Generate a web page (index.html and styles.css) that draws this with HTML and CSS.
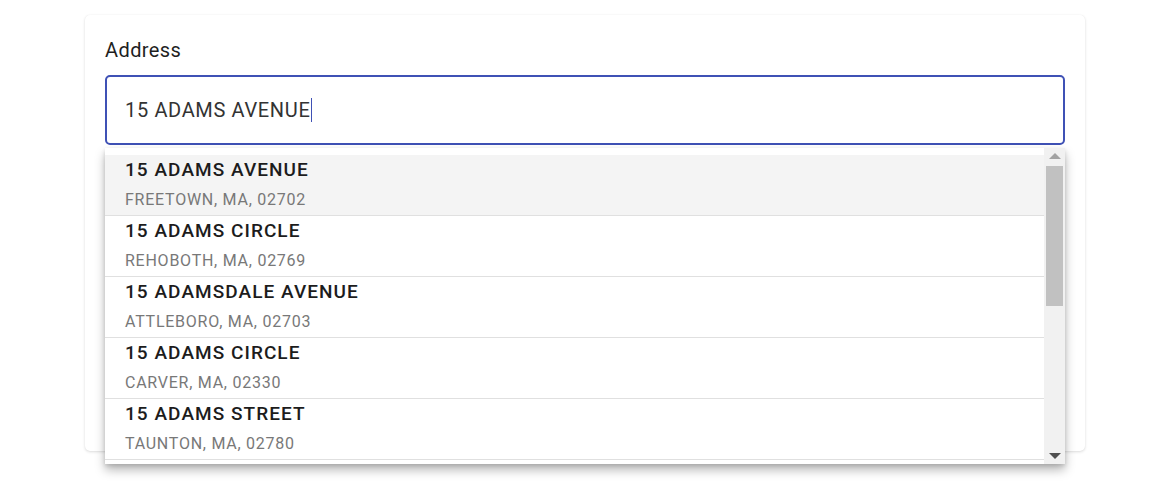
FILE: index.html
```html
<!DOCTYPE html>
<html lang="en">
<head>
<meta charset="utf-8">
<title>Address</title>
<link rel="stylesheet" href="styles.css">
</head>
<body>
<div class="page">
  <div class="card">
    <label class="label">Address</label>
    <div class="field">
      <div class="input"><span class="value">15 ADAMS AVENUE</span><span class="caret"></span></div>
      <div class="dropdown">
        <ul class="list">
          <li class="item active"><div class="title">15 ADAMS AVENUE</div><div class="sub">FREETOWN, MA, 02702</div></li>
          <li class="item"><div class="title">15 ADAMS CIRCLE</div><div class="sub">REHOBOTH, MA, 02769</div></li>
          <li class="item"><div class="title">15 ADAMSDALE AVENUE</div><div class="sub">ATTLEBORO, MA, 02703</div></li>
          <li class="item"><div class="title">15 ADAMS CIRCLE</div><div class="sub">CARVER, MA, 02330</div></li>
          <li class="item"><div class="title">15 ADAMS STREET</div><div class="sub">TAUNTON, MA, 02780</div></li>
        </ul>
        <div class="scrollbar">
          <div class="arrow up"></div>
          <div class="track"><div class="thumb"></div></div>
          <div class="arrow down"></div>
        </div>
      </div>
    </div>
  </div>
</div>
</body>
</html>
```
FILE: styles.css
```css
* { box-sizing: border-box; }
html, body { margin: 0; padding: 0; background: #fff; }
body { font-family: Roboto, "Liberation Sans", Arial, sans-serif; }
.page { padding: 15px 0 0 85px; height: 498px; overflow: hidden; }
.card {
  width: 1000px;
  height: 436px;
  background: #fff;
  border-radius: 5px;
  box-shadow: 0 1px 3px rgba(0,0,0,0.14), 0 0 1px rgba(0,0,0,0.06);
  padding: 22px 20px 0 20px;
}
.label {
  display: block;
  font-size: 20px;
  line-height: 26px;
  letter-spacing: 0.4px;
  color: #1f1f1f;
}
.field { position: relative; margin-top: 12px; }
.input {
  height: 70px;
  border: 2px solid #3f51b5;
  border-radius: 5px;
  display: flex;
  align-items: center;
  padding-left: 18px;
}
.value {
  font-size: 20px;
  letter-spacing: 0.65px;
  color: #333;
}
.caret {
  display: inline-block;
  width: 1px;
  height: 24px;
  background: #3f51b5;
  margin-left: 1px;
}
.dropdown {
  position: absolute;
  left: 0;
  top: 73px;
  width: 960px;
  height: 316px;
  background: #fff;
  box-shadow: 0 6px 10px rgba(0,0,0,0.28), 0 2px 4px rgba(0,0,0,0.12);
  display: flex;
  overflow: hidden;
  z-index: 2;
}
.list {
  list-style: none;
  margin: 0;
  padding: 7px 0 0 0;
  flex: 1;
}
.item {
  height: 61px;
  padding: 3px 20px 0 20px;
  border-bottom: 1px solid #e0e0e0;
}
.item.active { background: #f4f4f4; }
.title {
  font-size: 19px;
  line-height: 24px;
  font-weight: 500;
  letter-spacing: 1.05px;
  color: #1c1c1c;
}
.sub {
  margin-top: 8px;
  font-size: 16px;
  line-height: 20px;
  letter-spacing: 0.75px;
  color: #787878;
}
.scrollbar {
  width: 21px;
  background: #f1f1f1;
  display: flex;
  flex-direction: column;
  align-items: center;
}
.arrow { width: 17px; height: 17px; display: flex; align-items: center; justify-content: center; }
.arrow::before {
  content: "";
  width: 0; height: 0;
  border-left: 6px solid transparent;
  border-right: 6px solid transparent;
}
.arrow.up::before { border-bottom: 6px solid #a3a3a3; margin-top: -1px; }
.arrow.down::before { border-top: 6px solid #505050; }
.track { flex: 1; width: 17px; padding-top: 1px; }
.thumb { width: 17px; height: 140px; background: #c1c1c1; }
```
